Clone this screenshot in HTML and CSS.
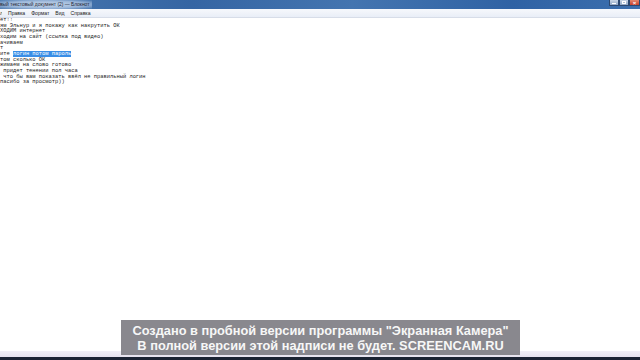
FILE: index.html
```html
<!DOCTYPE html>
<html lang="ru">
<head>
<meta charset="utf-8">
<title>Блокнот</title>
<link rel="stylesheet" href="styles.css">
</head>
<body>
<div class="screen">
  <div class="titlebar">
    <span class="title">вый текстовый документ (2) — Блокнот</span>
    <div class="controls">
      <span class="btn min"><i></i></span>
      <span class="btn max"><i></i></span>
      <span class="btn close">×</span>
    </div>
  </div>
  <div class="menubar">
    <span class="mi cut">л</span>
    <span class="mi">Правка</span>
    <span class="mi">Формат</span>
    <span class="mi">Вид</span>
    <span class="mi">Справка</span>
  </div>
  <div class="editor">
<pre class="text">ет!!
ям Эльнур и я покажу как накрутить ОК
ХОДИМ интернет
ходим на сайт (ссылка под видео)
ачиваем
т
ите <span class="sel">логин потом пароль</span>
том сколько ОК
жимаем на слово готово
 придет тенении пол часа
 что бы вам показать ввёл не правильный логин
пасибо за просмотр))</pre>
  </div>
  <div class="statusstrip"></div>
  <div class="taskbar"></div>
  <div class="watermark">
    <div class="wm-line">Создано в пробной версии программы "Экранная Камера"</div>
    <div class="wm-line">В полной версии этой надписи не будет. SCREENCAM.RU</div>
  </div>
</div>
</body>
</html>
```

FILE: styles.css
```css
html, body {
  margin: 0;
  padding: 0;
  background: #ffffff;
}
.screen {
  position: relative;
  width: 640px;
  height: 360px;
  overflow: hidden;
  display: flex;
  flex-direction: column;
  background: #ffffff;
}
.titlebar {
  height: 9px;
  flex: none;
  display: flex;
  justify-content: space-between;
  align-items: center;
  background: linear-gradient(90deg, #4a79b0 0%, #3565a3 30%, #4475b0 55%, #2f62a4 80%, #3c6fae 100%);
}
.title {
  font-family: "Liberation Sans", Arial, sans-serif;
  font-size: 4.9px;
  line-height: 9px;
  color: #1a2230;
  padding-right: 3px;
  background: radial-gradient(ellipse at center, rgba(225,235,248,0.85) 0%, rgba(210,225,245,0.6) 60%, rgba(200,220,245,0) 100%);
  white-space: nowrap;
}
.controls {
  display: flex;
  align-self: flex-start;
  height: 6px;
}
.btn {
  display: flex;
  align-items: center;
  justify-content: center;
  height: 6px;
  box-sizing: border-box;
  border: 1px solid #2c4870;
  border-top: none;
}
.btn.min, .btn.max {
  width: 10px;
  background: linear-gradient(#c9d6e6, #8fa7c6);
}
.btn.min i {
  display: block;
  width: 4px;
  height: 1px;
  background: #fff;
  margin-top: 2px;
}
.btn.max i {
  display: block;
  width: 4px;
  height: 3px;
  box-sizing: border-box;
  border: 1px solid #fff;
}
.btn.close {
  width: 11px;
  background: linear-gradient(#e5876f, #c9402a);
  color: #fff;
  font-family: "Liberation Sans", Arial, sans-serif;
  font-size: 6px;
  line-height: 6px;
  font-weight: bold;
}
.menubar {
  height: 8px;
  flex: none;
  display: flex;
  align-items: center;
  gap: 6px;
  background: linear-gradient(#f6f8fc, #e9eef7);
  border-bottom: 1px solid #d7dde8;
  font-family: "Liberation Sans", Arial, sans-serif;
  font-size: 5.1px;
  color: #222;
}
.mi.cut {
  margin-left: 0;
  width: 2px;
  overflow: hidden;
}
.editor {
  flex: 1;
  padding-top: 0;
  overflow: hidden;
}
.text {
  margin: 0;
  font-family: "Liberation Mono", "DejaVu Sans Mono", monospace;
  font-size: 5.4px;
  line-height: 5.65px;
  color: #1c1c1c;
  white-space: pre;
}
.sel {
  background: #3a8ee6;
  color: #ffffff;
}
.statusstrip {
  height: 6px;
  flex: none;
  background: linear-gradient(#f1eff6, #e6e2ee);
}
.taskbar {
  height: 3px;
  flex: none;
  background: #1b2333;
}
.watermark {
  position: absolute;
  left: 121px;
  top: 320px;
  width: 399px;
  height: 35px;
  background: rgba(128, 127, 133, 0.93);
  display: flex;
  flex-direction: column;
  justify-content: center;
  align-items: center;
  font-family: "Liberation Sans", Arial, sans-serif;
  font-weight: bold;
  font-size: 12.8px;
  line-height: 15px;
  color: #f7f7f7;
}
.wm-line {
  white-space: nowrap;
}
```
